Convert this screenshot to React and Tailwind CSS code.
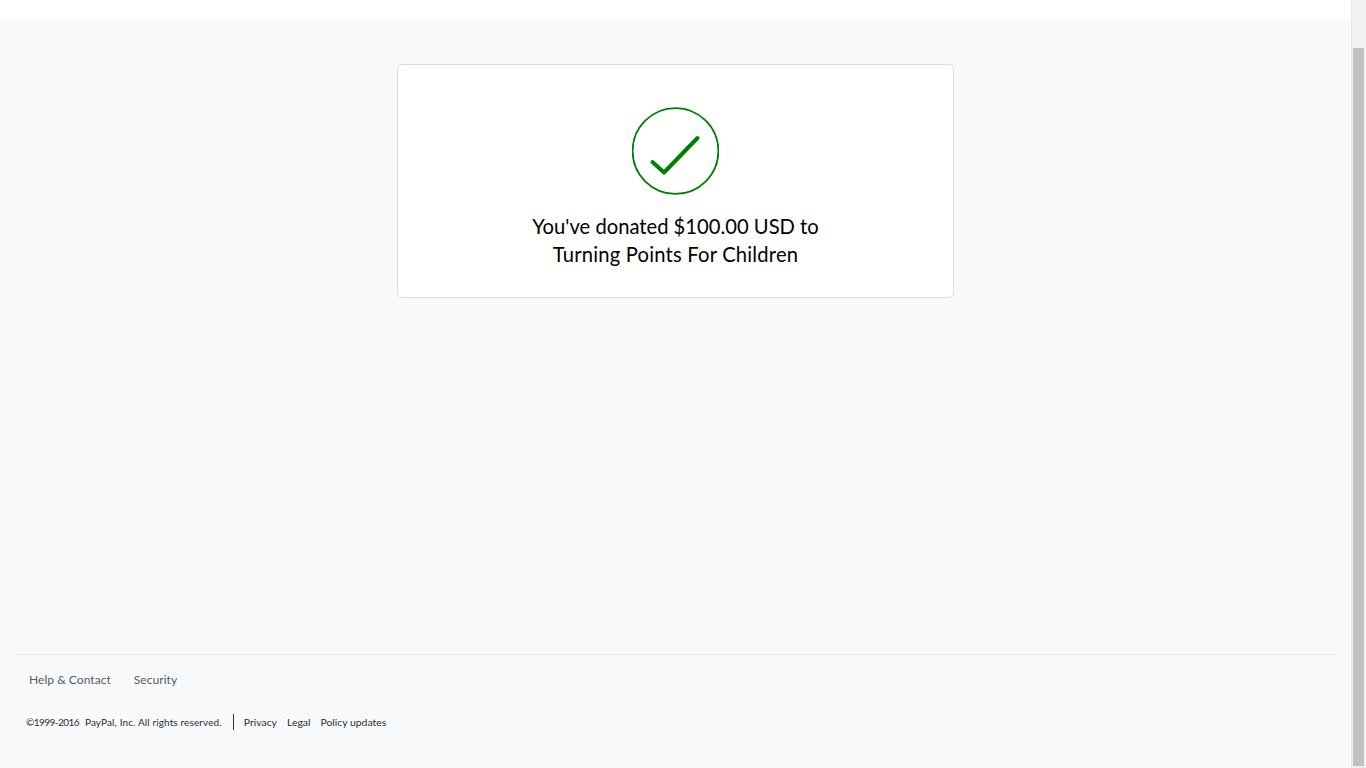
export default function App() {
  return (
    <div className="flex h-[768px] overflow-hidden bg-[#f8f9fb] font-['Lato','Noto_Sans',sans-serif]">
      <div className="flex w-[1351px] flex-col">
        <div className="h-[19px] bg-white" />
        <div className="mx-auto mt-[45px] flex h-[234px] w-[557px] flex-col items-center rounded-[5px] border border-[#d9dbdd] bg-white pt-[42px]">
          <svg width="87" height="88" viewBox="0 0 87 88" fill="none" stroke="#008000">
            <circle cx="43.5" cy="44" r="42.9" strokeWidth="1.8" />
            <path d="M20.5 55 L32 65.5 L65.5 31" strokeWidth="4" strokeLinecap="round" strokeLinejoin="round" />
          </svg>
          <h1 className="mt-[17px] text-center text-[20.2px] leading-[28px] font-normal text-black">
            You've donated $100.00 USD to
            <br />
            <span className="tracking-[0.2px]">Turning Points For Children</span>
          </h1>
        </div>
        <footer className="mt-auto h-[114px] px-[15px]">
          <div className="w-[1322px] border-t border-[#e6e8ea] pt-[16px]">
            <div className="flex gap-[23px] pl-[14px] text-[12.1px] leading-[18px] text-[#545d68]">
              <span>Help &amp; Contact</span>
              <span>Security</span>
            </div>
            <div className="mt-[25px] flex items-center pl-[11px] leading-[16px] text-[#2c2e2f]">
              <span className="text-[10px] tracking-[-0.55px]">©1999-2016</span>
              <span className="ml-[6px] text-[10px] tracking-[0.12px]">PayPal, Inc. All rights reserved.</span>
              <span className="mr-[10px] ml-[11px] h-[16px] w-px bg-[#2c2e2f]" />
              <div className="flex gap-[10px] text-[10.4px]">
                <span>Privacy</span>
                <span>Legal</span>
                <span>Policy updates</span>
              </div>
            </div>
          </div>
        </footer>
      </div>
      <div className="w-[15px] border-l border-[#e8e8e8] bg-[#f1f1f1] pt-[48px] pr-[2px] pb-[2px] pl-[1px]">
        <div className="h-full bg-[#c1c1c1]" />
      </div>
    </div>
  );
}
